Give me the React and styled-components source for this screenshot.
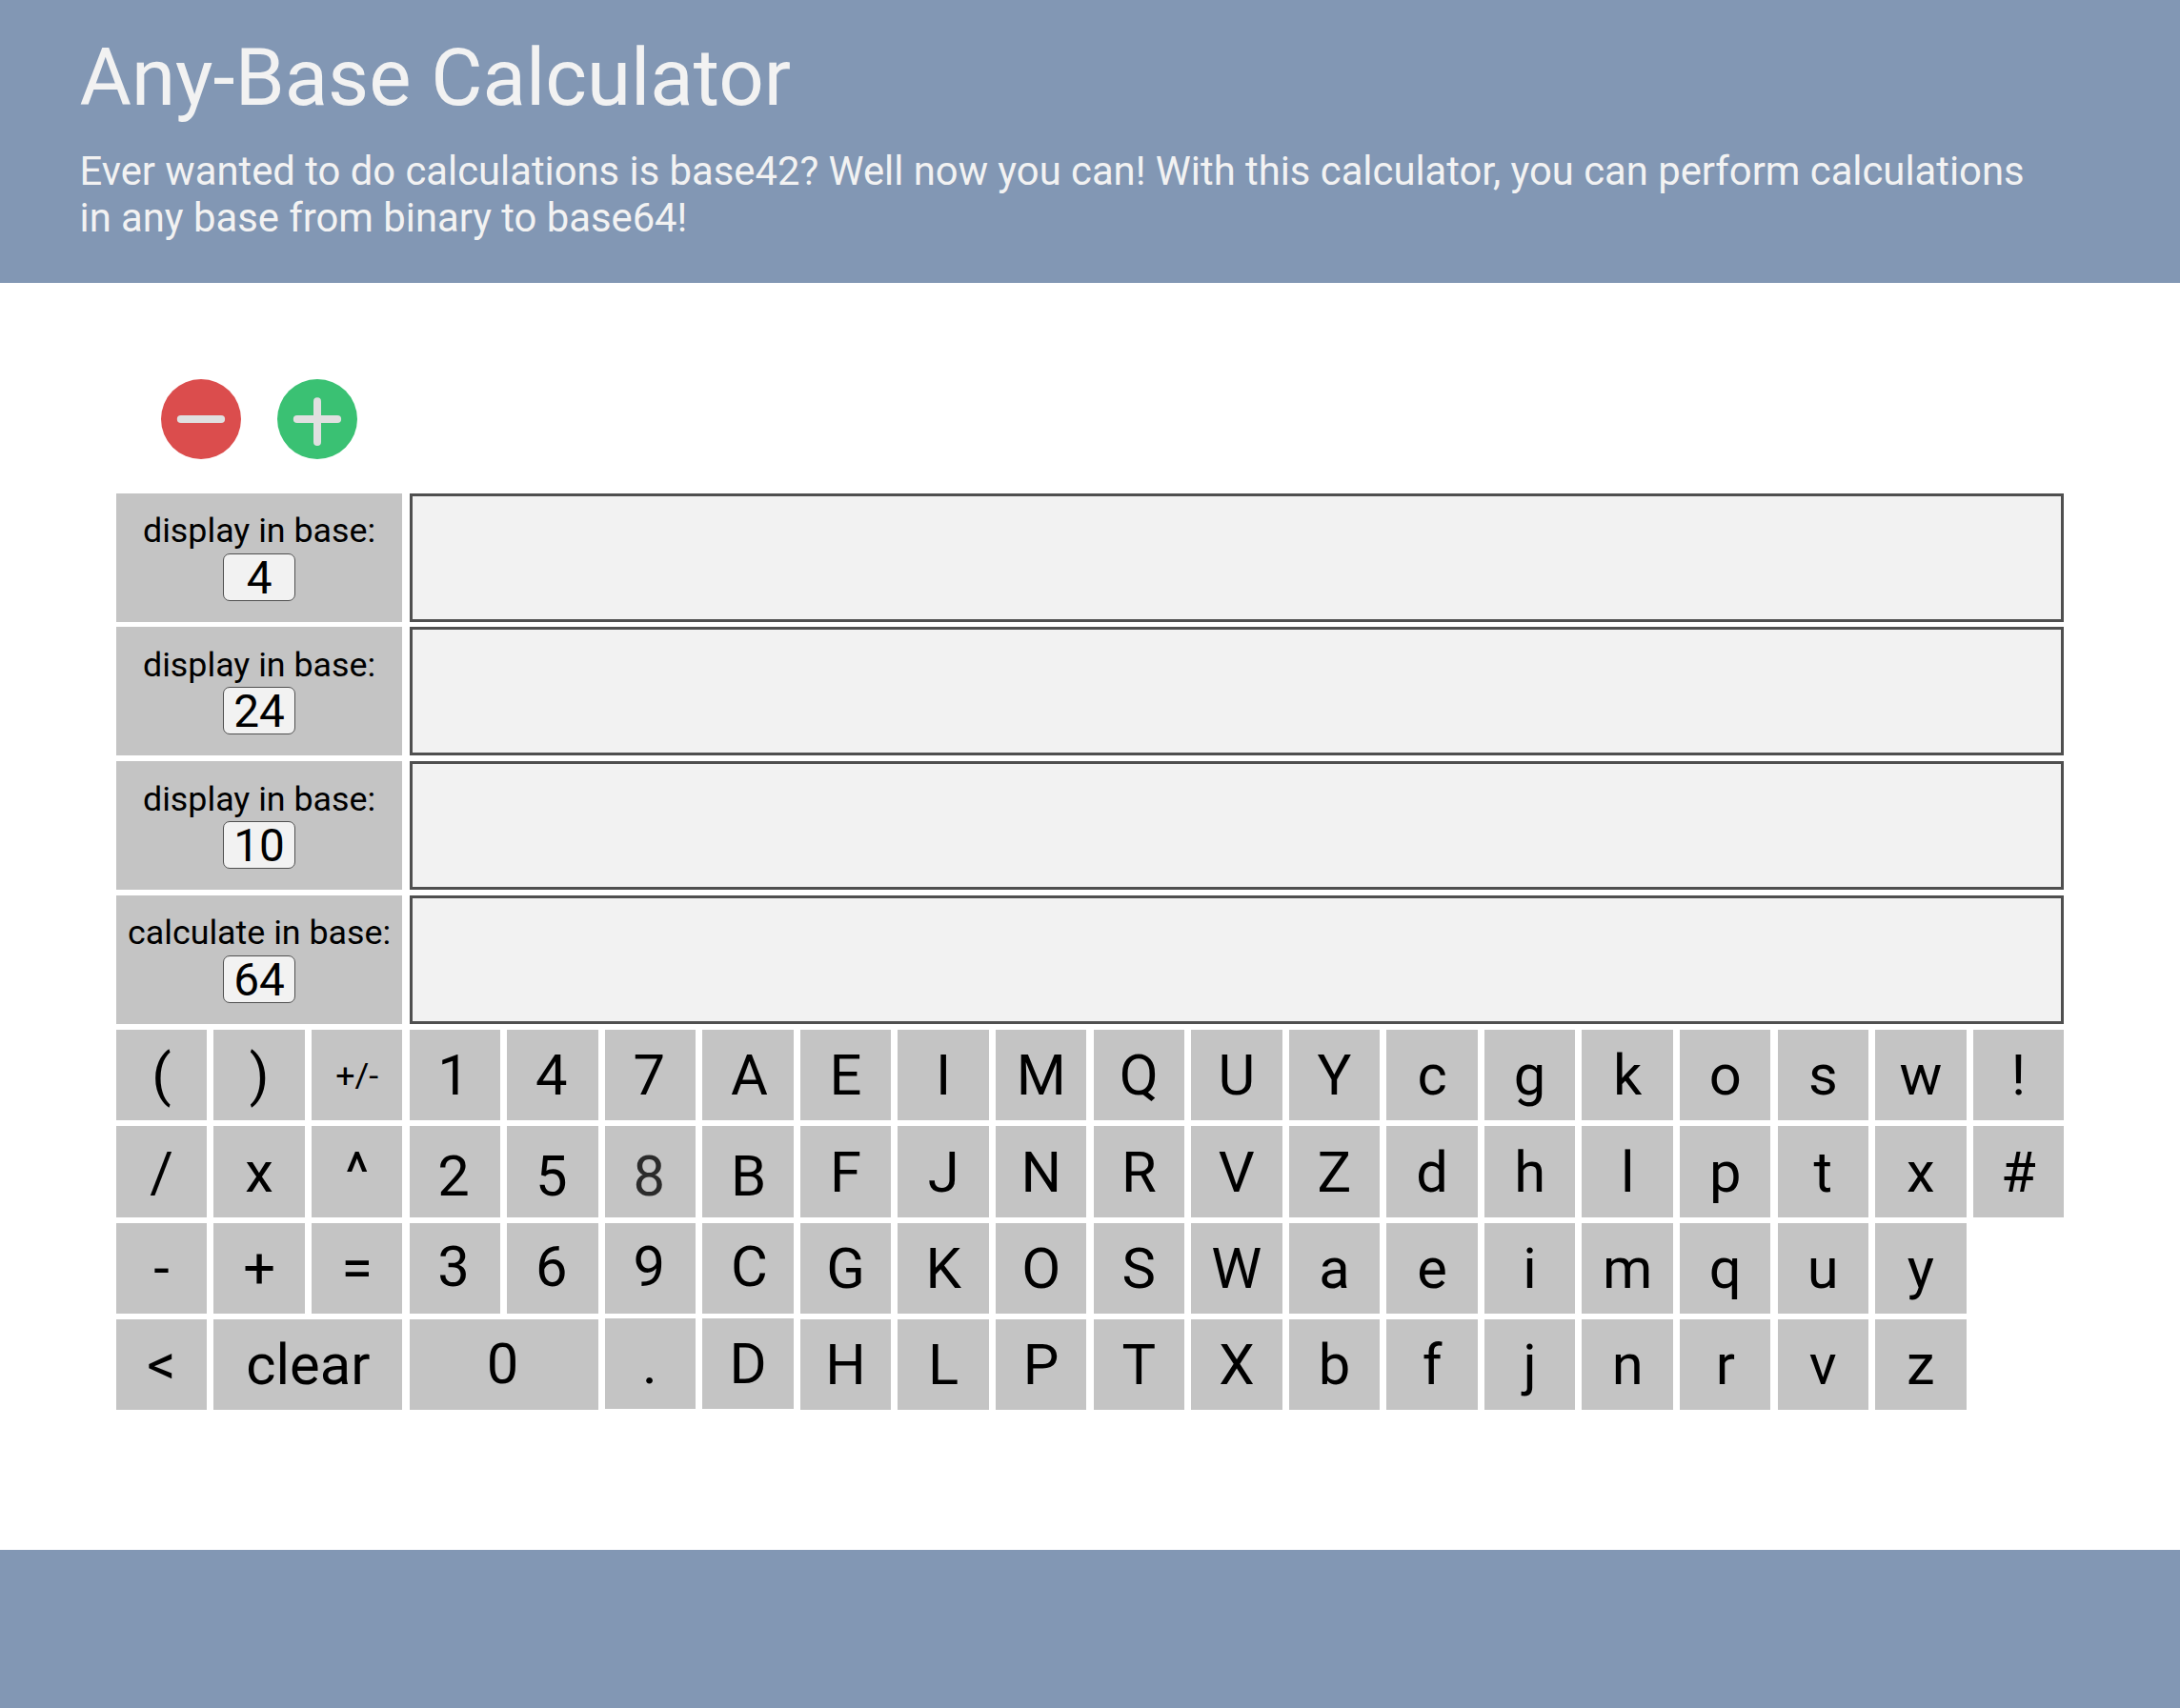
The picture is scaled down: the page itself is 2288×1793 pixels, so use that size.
import React from "react";
import styled, { createGlobalStyle } from "styled-components";

const GlobalStyle = createGlobalStyle`
  *, *::before, *::after {
    box-sizing: border-box;
  }
  body {
    margin: 0;
    background: #ffffff;
    font-family: Roboto, sans-serif;
    font-weight: 400;
  }
`;

const Page = styled.div`
  display: flex;
  flex-direction: column;
  width: 2288px;
  height: 1793px;
  overflow: hidden;
`;

const Header = styled.header`
  flex: none;
  height: 297px;
  padding: 33px 83.5px 0;
  background: #8297b4;
  color: #f2f2f2;
`;

const Title = styled.h1`
  margin: 0;
  font-size: 83.5px;
  font-weight: 400;
  line-height: 98px;
`;

const Intro = styled.p`
  margin: 24px 0 0;
  width: 2060px;
  font-size: 41.77px;
  line-height: 49px;
`;

const Main = styled.main`
  flex: 1;
  padding: 101px 121.3px 0 121.8px;
`;

const Footer = styled.footer`
  flex: none;
  height: 166px;
  background: #8297b4;
`;

const RowControls = styled.div`
  display: flex;
  gap: 37.7px;
  height: 84px;
  margin: 0 0 35.7px 47.7px;
`;

const RoundButton = styled.button`
  display: block;
  width: 84px;
  height: 84px;
  padding: 0;
  border: 0;
  border-radius: 50%;
  background: ${({ $color }) => $color};

  svg {
    display: block;
  }
`;

const DisplayList = styled.div`
  display: flex;
  flex-direction: column;
  gap: 5.7px;
`;

const DisplayRow = styled.div`
  display: flex;
  gap: 7.2px;
  height: 135px;
`;

const BaseCell = styled.div`
  display: flex;
  flex-direction: column;
  align-items: center;
  flex: none;
  width: 300.6px;
  padding-top: 18.5px;
  background: #c4c4c4;
`;

const BaseLabel = styled.span`
  font-size: 35.81px;
  line-height: 42px;
  white-space: nowrap;
`;

const BaseValue = styled.span`
  width: 76px;
  height: 50px;
  margin-top: 2.6px;
  border: 1px solid #4f4f4f;
  border-radius: 7px;
  background: #f2f2f2;
  font-size: 47.75px;
  line-height: 50px;
  text-align: center;
`;

const Screen = styled.div`
  flex: none;
  width: 1736.8px;
  border: 3px solid #4f4f4f;
  background: #f2f2f2;
`;

const Keypad = styled.div`
  display: grid;
  grid-template-columns: repeat(20, 95.4px);
  grid-auto-rows: 95.4px;
  gap: 5.93px 7.2px;
  margin-top: 6.2px;
`;

const Key = styled.button`
  display: flex;
  align-items: center;
  justify-content: center;
  grid-column: span ${({ $span }) => $span || 1};
  margin: ${({ $raised }) => ($raised ? "-1px 0 1px" : "0")};
  padding: ${({ $down = 0 }) => Math.max(0, 2 * $down)}px
    ${({ $right = 0 }) => Math.max(0, -2 * $right)}px
    ${({ $down = 0 }) => Math.max(0, -2 * $down)}px
    ${({ $right = 0 }) => Math.max(0, 2 * $right)}px;
  border: 0;
  background: #c4c4c4;
  color: ${({ $muted }) => ($muted ? "#2b2b2b" : "#000000")};
  font-family: inherit;
  font-size: ${({ $small }) => ($small ? "35.81px" : "59.7px")};
  line-height: normal;
  white-space: nowrap;
`;

const displays = [
  { label: "display in base:", base: "4" },
  { label: "display in base:", base: "24" },
  { label: "display in base:", base: "10" },
  { label: "calculate in base:", base: "64" },
];

const letters = (text, down = 0) => text.split("").map((label) => ({ label, down }));
const digit = (label, down = 0, extra = {}) => ({ label, right: -1.1, down, ...extra });

const rows = [
  [
    ...letters("()"),
    { label: "+/-", small: true },
    digit("1"),
    digit("4"),
    digit("7"),
    { label: "A", right: 1.4 },
    ...letters("EIMQUYcgkosw!"),
  ],
  [
    ...letters("/x^", 0.6),
    digit("2", 4.7),
    digit("5", 4.7),
    digit("8", 4.7, { muted: true }),
    { label: "B", right: 0.6, down: 4.7 },
    ...letters("FJNRVZdhlptx#", 0.6),
  ],
  [
    ...letters("-+=", 0.6),
    digit("3", -0.9),
    digit("6", -0.9),
    digit("9", -0.9),
    { label: "C", right: 1.5, down: -0.9 },
    ...letters("GKOSWaeimquy", 0.6),
  ],
  [
    { label: "<" },
    { label: "clear", span: 2 },
    digit("0", -1, { span: 2 }),
    { label: ".", right: -0.5, raised: true },
    { label: "D", right: 0.2, raised: true },
    ...letters("HLPTXbfjnrvz"),
  ],
];

const EmptySlot = styled.span`
  background: transparent;
`;

function MinusIcon() {
  return (
    <svg width="84" height="84" viewBox="0 0 84 84" fill="#e0e0e0">
      <rect x="16.8" y="38" width="50.3" height="8" rx="4" />
    </svg>
  );
}

function PlusIcon() {
  return (
    <svg width="84" height="84" viewBox="0 0 84 84" fill="#e0e0e0">
      <rect x="16.8" y="38" width="50.3" height="8" rx="4" />
      <rect x="38" y="19.3" width="8" height="50.7" rx="4" />
    </svg>
  );
}

export default function App() {
  return (
    <>
      <GlobalStyle />
      <Page>
        <Header>
          <Title>Any-Base Calculator</Title>
          <Intro>
            Ever wanted to do calculations is base42? Well now you can! With this calculator, you can
            perform calculations in any base from binary to base64!
          </Intro>
        </Header>
        <Main>
          <RowControls>
            <RoundButton $color="#db4d4d">
              <MinusIcon />
            </RoundButton>
            <RoundButton $color="#3ac173">
              <PlusIcon />
            </RoundButton>
          </RowControls>
          <DisplayList>
            {displays.map(({ label, base }) => (
              <DisplayRow key={base}>
                <BaseCell>
                  <BaseLabel>{label}</BaseLabel>
                  <BaseValue>{base}</BaseValue>
                </BaseCell>
                <Screen />
              </DisplayRow>
            ))}
          </DisplayList>
          <Keypad>
            {rows.map((keys, row) => (
              <React.Fragment key={row}>
                {keys.map((k, i) => (
                  <Key
                    key={i}
                    $span={k.span}
                    $right={k.right}
                    $down={k.down}
                    $small={k.small}
                    $muted={k.muted}
                    $raised={k.raised}
                  >
                    {k.label}
                  </Key>
                ))}
                {row > 1 && <EmptySlot />}
              </React.Fragment>
            ))}
          </Keypad>
        </Main>
        <Footer />
      </Page>
    </>
  );
}
